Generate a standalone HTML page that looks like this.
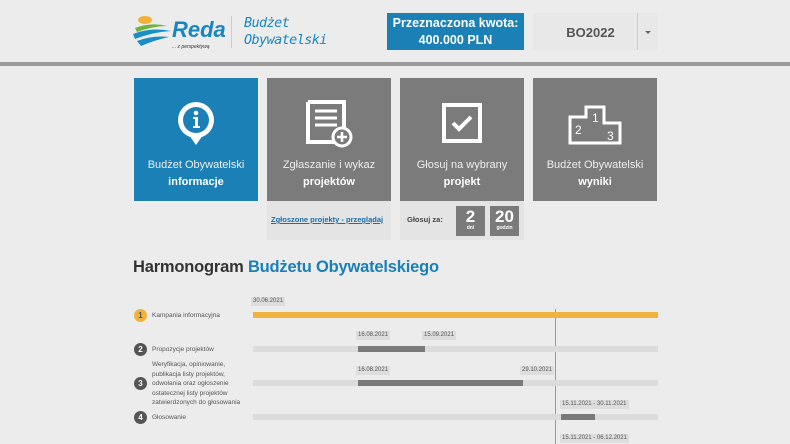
<!DOCTYPE html>
<html><head><meta charset="utf-8"><style>
*{margin:0;padding:0;box-sizing:border-box}
body{width:790px;height:444px;overflow:hidden;background:#ececec;font-family:"Liberation Sans",sans-serif;position:relative}
.a{position:absolute}
.tile{position:absolute;top:78px;width:124px;height:123px;background:#7b7b7b;color:#eee;text-align:center;font-size:11px;line-height:17px}
.tile .t{position:absolute;top:79px;left:0;right:0}
.tile b{color:#fff}
.lbl{position:absolute;font-size:6px;color:#555;background:#ddd;padding:1px 2px;line-height:7px}
.circ{position:absolute;left:134px;width:13px;height:13px;border-radius:50%;background:#555;color:#fff;font-size:8px;font-weight:bold;text-align:center;line-height:13px}
.rt{position:absolute;left:152px;font-size:6.5px;color:#555;line-height:9.5px}
.bg{position:absolute;left:253px;width:405px;height:6px;background:#dcdcdc}
.dk{position:absolute;height:6px;background:#7a7a7a}
</style></head><body>
<div class="a" style="left:0;top:62px;width:790px;height:4px;background:#9a9a9a"></div>
<svg class="a" style="left:133px;top:14px" width="40" height="36" viewBox="0 0 40 36">
<ellipse cx="12" cy="6" rx="7" ry="4" fill="#f2b23a"/>
<path d="M2 14 Q18 8 34 12 Q20 12 4 18Z" fill="#6db33f"/>
<path d="M0 20 Q18 13 38 17 Q20 18 2 25Z" fill="#1a8fc4"/>
<path d="M4 27 Q20 21 36 23 Q22 26 8 32Z" fill="#1a8fc4"/>
</svg>
<div class="a" style="left:172px;top:17px;font-size:22px;font-weight:bold;font-style:italic;color:#1a86c0">Reda</div>
<div class="a" style="left:172px;top:44px;font-size:5px;color:#333;font-style:italic">... z perspektywą</div>
<div class="a" style="left:231px;top:16px;width:1px;height:32px;background:#ccc"></div>
<div class="a" style="left:244px;top:15px;font-size:13.5px;color:#1a86c0;font-style:italic;font-family:'DejaVu Sans Mono',monospace;line-height:17px;letter-spacing:-0.6px">Budżet<br>Obywatelski</div>
<div class="a" style="left:387px;top:13px;width:137px;height:37px;background:#1a80b6;color:#fff;font-weight:bold;font-size:12.5px;text-align:center;line-height:17px;padding-top:2px">Przeznaczona kwota:<br>400.000 PLN</div>
<div class="a" style="left:533px;top:13px;width:125px;height:37px;background:#e8e8e8"></div>
<div class="a" style="left:533px;top:25px;width:115px;text-align:center;font-size:13px;font-weight:bold;color:#555">BO2022</div>
<div class="a" style="left:637px;top:13px;width:1px;height:37px;background:#ccc"></div>
<div class="a" style="left:645px;top:31px;border-left:3px solid transparent;border-right:3px solid transparent;border-top:3px solid #666"></div>
<div class="tile" style="left:134px;background:#1a80b6">
<svg class="a" style="left:41px;top:22px" width="42" height="50" viewBox="0 0 42 50"><circle cx="21" cy="20" r="18" fill="#fff"/><path d="M14 35 L21 45 L28 35Z" fill="#fff"/><circle cx="21" cy="20" r="13" fill="#1a80b6"/><circle cx="21" cy="13" r="2.3" fill="#fff"/><path d="M18 17h5v9h2v2h-7v-2h2v-7h-2z" fill="#fff"/></svg>
<div class="t">Budżet Obywatelski<br><b>informacje</b></div></div>
<div class="tile" style="left:267px">
<svg class="a" style="left:38px;top:22px" width="50" height="48" viewBox="0 0 50 48"><path d="M3 2h36v28M3 2v40h27" fill="none" stroke="#fff" stroke-width="4"/><path d="M10 11h22M10 18h22M10 25h22" stroke="#fff" stroke-width="3"/><circle cx="37" cy="37" r="9" fill="#7b7b7b" stroke="#fff" stroke-width="3"/><path d="M37 32v10M32 37h10" stroke="#fff" stroke-width="2.5"/></svg>
<div class="t">Zgłaszanie i wykaz<br><b>projektów</b></div></div>
<div class="tile" style="left:400px">
<svg class="a" style="left:42px;top:25px" width="40" height="40" viewBox="0 0 40 40"><rect x="2" y="2" width="36" height="36" fill="none" stroke="#fff" stroke-width="4"/><path d="M11 20l6 6 12-12" fill="none" stroke="#fff" stroke-width="4"/></svg>
<div class="t">Głosuj na wybrany<br><b>projekt</b></div></div>
<div class="tile" style="left:533px">
<svg class="a" style="left:35px;top:27px" width="54" height="40" viewBox="0 0 54 40"><path d="M2 38V12h16V2h18v16h16v20z" fill="none" stroke="#fff" stroke-width="3"/><text x="7" y="29" font-size="12" fill="#fff" font-family="Liberation Sans">2</text><text x="24" y="17" font-size="12" fill="#fff" font-family="Liberation Sans">1</text><text x="39" y="35" font-size="12" fill="#fff" font-family="Liberation Sans">3</text></svg>
<div class="t">Budżet Obywatelski<br><b>wyniki</b></div></div>
<div class="a" style="left:267px;top:201px;width:124px;height:39px;background:#e4e4e4"></div>
<div class="a" style="left:271px;top:215px;font-size:7.5px;color:#1a6fa8;text-decoration:underline;font-weight:bold">Zgłoszone projekty - przeglądaj</div>
<div class="a" style="left:400px;top:201px;width:124px;height:39px;background:#e4e4e4"></div>
<div class="a" style="left:407px;top:215px;font-size:7.5px;color:#444;font-weight:bold">Głosuj za:</div>
<div class="a" style="left:456px;top:206px;width:29px;height:30px;background:#7a7a7a;color:#fff;text-align:center;font-weight:bold;font-size:17px;line-height:17px;padding-top:2px">2<div style="font-size:5px;line-height:7px">dni</div></div>
<div class="a" style="left:490px;top:206px;width:29px;height:30px;background:#7a7a7a;color:#fff;text-align:center;font-weight:bold;font-size:17px;line-height:17px;padding-top:2px">20<div style="font-size:5px;line-height:7px">godzin</div></div>
<div class="a" style="left:133px;top:258px;font-size:16.5px;font-weight:bold;color:#333;letter-spacing:-0.2px">Harmonogram <span style="color:#1a80b6">Budżetu Obywatelskiego</span></div>
<div class="a" style="left:555px;top:309px;width:1px;height:135px;background:#999"></div>
<div class="lbl" style="left:251px;top:297px">30.06.2021</div>
<div class="circ" style="top:309px;background:#f0b43c;color:#555">1</div><div class="rt" style="top:311px">Kampania informacyjna</div>
<div class="a" style="left:253px;top:312px;width:405px;height:6px;background:#f0b43c"></div>
<div class="lbl" style="left:356px;top:331px">16.08.2021</div><div class="lbl" style="left:422px;top:331px">15.09.2021</div>
<div class="circ" style="top:343px">2</div><div class="rt" style="top:345px">Propozycje projektów</div>
<div class="bg" style="top:346px"></div><div class="dk" style="left:358px;top:346px;width:67px"></div>
<div class="lbl" style="left:356px;top:366px">16.08.2021</div><div class="lbl" style="left:520px;top:366px">29.10.2021</div>
<div class="circ" style="top:377px">3</div><div class="rt" style="top:360px">Weryfikacja, opiniowanie,<br>publikacja listy projektów,<br>odwołania oraz ogłoszenie<br>ostatecznej listy projektów<br>zatwierdzonych do głosowania</div>
<div class="bg" style="top:380px"></div><div class="dk" style="left:358px;top:380px;width:165px"></div>
<div class="lbl" style="left:560px;top:400px">15.11.2021 - 30.11.2021</div>
<div class="circ" style="top:411px">4</div><div class="rt" style="top:413px">Głosowanie</div>
<div class="bg" style="top:414px"></div><div class="dk" style="left:561px;top:414px;width:34px"></div>
<div class="lbl" style="left:560px;top:434px">15.11.2021 - 06.12.2021</div>
</body></html>
